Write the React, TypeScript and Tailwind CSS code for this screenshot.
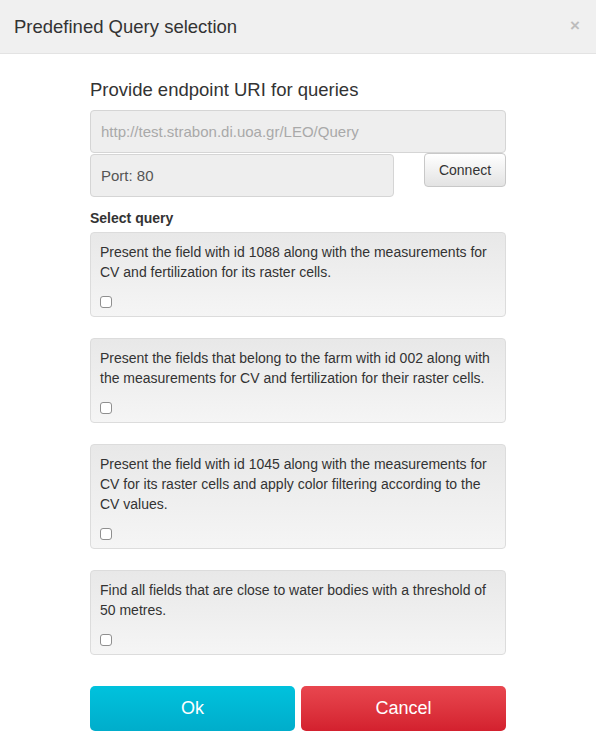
import React from 'react';

const queries = [
  'Present the field with id 1088 along with the measurements for CV and fertilization for its raster cells.',
  'Present the fields that belong to the farm with id 002 along with the measurements for CV and fertilization for their raster cells.',
  'Present the field with id 1045 along with the measurements for CV for its raster cells and apply color filtering according to the CV values.',
  'Find all fields that are close to water bodies with a threshold of 50 metres.',
];

const App: React.FC = () => {
  return (
    <div className="w-[596px] h-[749px] bg-white text-[#333] font-['Liberation_Sans',Arial,sans-serif]">
      {/* Header */}
      <div className="h-[54px] bg-[#f0f0f0] border-b border-[#e3e3e3] flex items-center justify-between pl-[14px] pr-[16px]">
        <h1 className="text-[18.5px] leading-none mt-[2px]">Predefined Query selection</h1>
        <span className="text-[#bdbdbd] text-[17px] font-bold leading-none -mt-[3px]">×</span>
      </div>

      {/* Body */}
      <div className="w-[416px] ml-[90px] pt-[25px]">
        <h2 className="text-[18.5px] leading-[22px] mb-[9px]">Provide endpoint URI for queries</h2>
        <input
          readOnly
          placeholder="http://test.strabon.di.uoa.gr/LEO/Query"
          className="block w-full h-[43px] px-[10px] text-[15px] bg-[#eeeeee] border border-[#d5d5d5] rounded-[4px] placeholder:text-[#a9a9a9] outline-none"
        />
        <div className="flex items-start justify-between mt-[1px]">
          <input
            readOnly
            value="Port: 80"
            className="block w-[304px] h-[43px] px-[10px] text-[15px] text-[#555] bg-[#eeeeee] border border-[#d5d5d5] rounded-[4px] outline-none"
          />
          <button className="w-[82px] h-[34px] text-[14px] text-[#333] bg-gradient-to-b from-[#ffffff] to-[#e3e3e3] border border-[#c8c8c8] rounded-[4px] mt-[-1px]">
            Connect
          </button>
        </div>

        <div className="text-[14px] font-bold mt-[12px] mb-[5px] leading-[18px]">Select query</div>

        <div className="flex flex-col gap-[21px]">
          {queries.map((q) => (
            <div
              key={q}
              className="bg-gradient-to-b from-[#e8e8e8] to-[#f5f5f5] border border-[#dcdcdc] rounded-[4px] pl-[9px] pr-[8px] pt-[9px] pb-[8px] text-[14px] leading-[20px]"
            >
              <p>{q}</p>
              <div className="mt-[14px] h-[12px]">
                <span className="block w-[12px] h-[12px] bg-white border border-[#8f8f8f] rounded-[3px]" />
              </div>
            </div>
          ))}
        </div>

        <div className="flex gap-[6px] mt-[31px]">
          <button className="flex-1 h-[45px] rounded-[5px] bg-gradient-to-b from-[#00c2dd] to-[#00adcb] text-white text-[18px]">
            Ok
          </button>
          <button className="flex-1 h-[45px] rounded-[5px] bg-gradient-to-b from-[#e9464f] to-[#d3202e] text-white text-[18px]">
            Cancel
          </button>
        </div>
      </div>
    </div>
  );
};

export default App;
